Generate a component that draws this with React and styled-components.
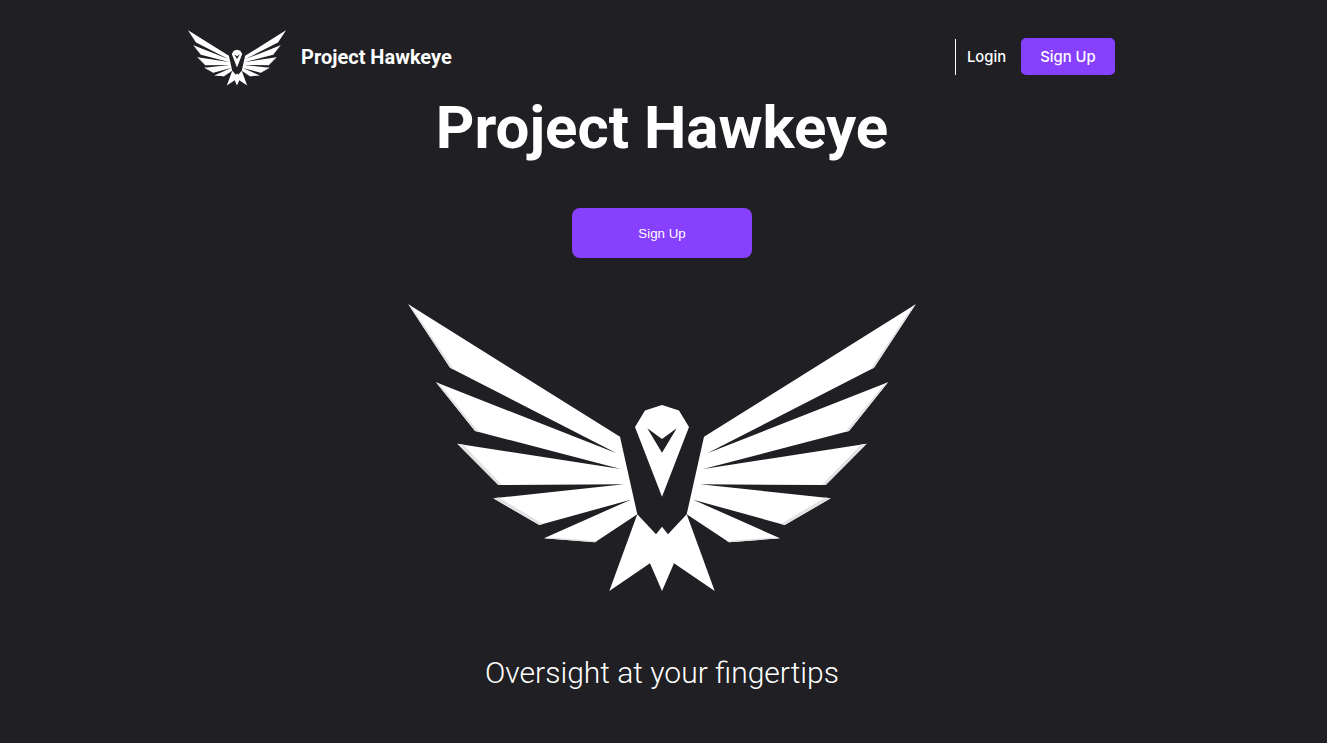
import React from "react";
import styled, { createGlobalStyle } from "styled-components";

const GlobalStyle = createGlobalStyle`
  html, body {
    margin: 0;
    padding: 0;
    background-color: #202024;
    color: #fff;
    font-family: "Roboto", "Liberation Sans", sans-serif;
  }
`;

const Page = styled.div`
  display: flex;
  flex-direction: column;
  align-items: center;
  box-sizing: border-box;
  height: 743px;
  padding-right: 3px;
  overflow: hidden;
`;

const Nav = styled.nav`
  display: flex;
  align-items: center;
  justify-content: space-between;
  align-self: flex-start;
  box-sizing: border-box;
  width: 927px;
  height: 94px;
  padding-top: 21px;
  margin-left: 188px;
  flex-shrink: 0;
`;

const Brand = styled.div`
  display: flex;
  align-items: center;
  gap: 15px;
`;

const BrandName = styled.span`
  margin-top: -1px;
  font-size: 20px;
  font-weight: 700;
`;

const NavLinks = styled.div`
  display: flex;
  align-items: flex-end;
  margin-top: -2px;
`;

const Login = styled.a`
  display: flex;
  align-items: center;
  box-sizing: border-box;
  width: 66px;
  height: 36px;
  padding: 0 0 1px 11px;
  border-left: 1px solid #fff;
  font-family: "Inter", sans-serif;
  font-size: 14.8px;
  font-weight: 500;
`;

const Button = styled.button`
  border: 0;
  color: #fff;
  background-color: #8840ff;
  cursor: pointer;
  width: ${(props) => (props.$large ? "180px" : "94px")};
  height: ${(props) => (props.$large ? "50px" : "37px")};
  border-radius: ${(props) => (props.$large ? "8px" : "5px")};
  font-family: ${(props) =>
    props.$large ? '"Liberation Sans", Arial, sans-serif' : '"Inter", sans-serif'};
  font-size: ${(props) => (props.$large ? "13.33px" : "14.8px")};
  font-weight: ${(props) => (props.$large ? 400 : 500)};
`;

const Title = styled.h1`
  margin: 0 0 47px;
  font-size: 60px;
  line-height: 67px;
  font-weight: 700;
`;

const Hero = styled.div`
  margin-top: 46px;
  display: flex;
`;

const Tagline = styled.p`
  margin: 61px 0 0;
  font-size: 30px;
  line-height: 40px;
  font-weight: 300;
`;

const LogoSvg = styled.svg`
  filter: blur(${(props) => (props.$small ? "0.2px" : "0.4px")});
`;

// one outline, walking feather tip, outer corner and gap apex down to the root
const wing =
  "408.3,304.3 450,367.7 616.7,453.3 " +
  "436,382.3 475,431 620.7,469 " +
  "457.3,443.7 498.3,485 624,484.3 " +
  "493.3,498.3 539.3,525 630.7,499.7 " +
  "544,538.3 595,542.3 637.3,514.3 620,436.7";

// grey bevel along the outer edge of each feather
const bevels = [
  "408.3,304.3 450,367.7 454,369.8 411,306",
  "436,382.3 475,431 479,432 439,383.6",
  "457.3,443.7 498.3,485 502,485 463,444.6",
  "493.3,498.3 539.3,525 543,524 499,497.6",
  "544,538.3 595,542.3 597,541 552,537.6",
];

const Wing = () => (
  <>
    <polygon points={wing} fill="#fff" />
    {bevels.map((points) => (
      <polygon key={points} points={points} fill="#e2e2e3" />
    ))}
  </>
);

const HawkLogo = ({ width, height, small }) => (
  <LogoSvg $small={small} width={width} height={height} viewBox="408 304 508 288">
    <Wing />
    <g transform="translate(1324 0) scale(-1 1)">
      <Wing />
    </g>
    <polygon
      points="637.3,514.3 609.3,591 650,563.3 662,591 674,563.3 714.7,591 686.7,514.3 668,534.3 662,526.7 656,534.3"
      fill="#fff"
    />
    <path
      fillRule="evenodd"
      fill="#fff"
      d="M662 405 L645 410.5 L635 427 L662 496.7 L689 427 L679 410.5 Z M647.3 428.3 L662 439 L676.7 428.3 L662 452.7 Z"
    />
  </LogoSvg>
);

const App = () => (
  <Page>
    <GlobalStyle />
    <Nav>
      <Brand>
        <HawkLogo width={98} height={56} small />
        <BrandName>Project Hawkeye</BrandName>
      </Brand>
      <NavLinks>
        <Login>Login</Login>
        <Button>Sign Up</Button>
      </NavLinks>
    </Nav>
    <Title>Project Hawkeye</Title>
    <Button $large>Sign Up</Button>
    <Hero>
      <HawkLogo width={508} height={288} />
    </Hero>
    <Tagline>Oversight at your fingertips</Tagline>
  </Page>
);

export default App;
